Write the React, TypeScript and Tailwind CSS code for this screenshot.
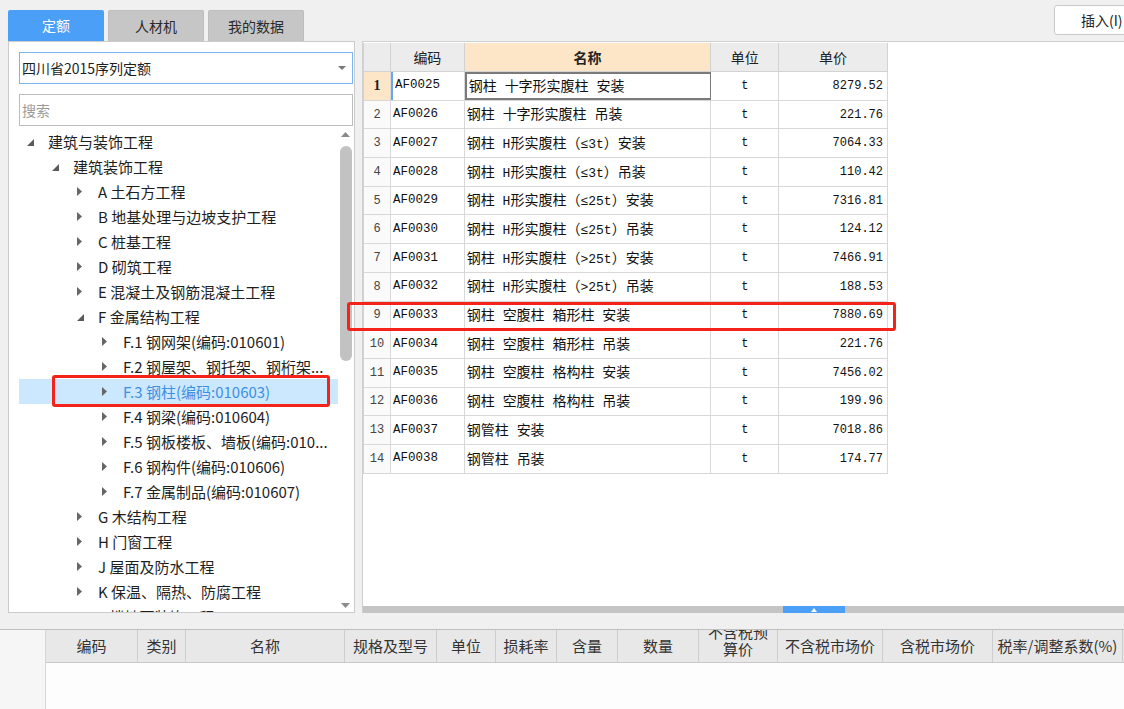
import React from "react";

type TreeItem = {
  level: number;
  label: string;
  state: "open" | "closed";
  selected?: boolean;
};

const tree: TreeItem[] = [
  { level: 0, label: "建筑与装饰工程", state: "open" },
  { level: 1, label: "建筑装饰工程", state: "open" },
  { level: 2, label: "A 土石方工程", state: "closed" },
  { level: 2, label: "B 地基处理与边坡支护工程", state: "closed" },
  { level: 2, label: "C 桩基工程", state: "closed" },
  { level: 2, label: "D 砌筑工程", state: "closed" },
  { level: 2, label: "E 混凝土及钢筋混凝土工程", state: "closed" },
  { level: 2, label: "F 金属结构工程", state: "open" },
  { level: 3, label: "F.1 钢网架(编码:010601)", state: "closed" },
  { level: 3, label: "F.2 钢屋架、钢托架、钢桁架...", state: "closed" },
  { level: 3, label: "F.3 钢柱(编码:010603)", state: "closed", selected: true },
  { level: 3, label: "F.4 钢梁(编码:010604)", state: "closed" },
  { level: 3, label: "F.5 钢板楼板、墙板(编码:010...", state: "closed" },
  { level: 3, label: "F.6 钢构件(编码:010606)", state: "closed" },
  { level: 3, label: "F.7 金属制品(编码:010607)", state: "closed" },
  { level: 2, label: "G 木结构工程", state: "closed" },
  { level: 2, label: "H 门窗工程", state: "closed" },
  { level: 2, label: "J 屋面及防水工程", state: "closed" },
  { level: 2, label: "K 保温、隔热、防腐工程", state: "closed" },
  { level: 2, label: "L 楼地面装饰工程", state: "closed" },
];

const rows = [
  ["AF0025", "钢柱 十字形实腹柱 安装", "8279.52"],
  ["AF0026", "钢柱 十字形实腹柱 吊装", "221.76"],
  ["AF0027", "钢柱 H形实腹柱（≤3t）安装", "7064.33"],
  ["AF0028", "钢柱 H形实腹柱（≤3t）吊装", "110.42"],
  ["AF0029", "钢柱 H形实腹柱（≤25t）安装", "7316.81"],
  ["AF0030", "钢柱 H形实腹柱（≤25t）吊装", "124.12"],
  ["AF0031", "钢柱 H形实腹柱（>25t）安装", "7466.91"],
  ["AF0032", "钢柱 H形实腹柱（>25t）吊装", "188.53"],
  ["AF0033", "钢柱 空腹柱 箱形柱 安装", "7880.69"],
  ["AF0034", "钢柱 空腹柱 箱形柱 吊装", "221.76"],
  ["AF0035", "钢柱 空腹柱 格构柱 安装", "7456.02"],
  ["AF0036", "钢柱 空腹柱 格构柱 吊装", "199.96"],
  ["AF0037", "钢管柱 安装", "7018.86"],
  ["AF0038", "钢管柱 吊装", "174.77"],
];

const bottomCols = [
  { w: "w-[92px]", label: "编码" },
  { w: "w-[48px]", label: "类别" },
  { w: "w-[159px]", label: "名称" },
  { w: "w-[92px]", label: "规格及型号" },
  { w: "w-[59px]", label: "单位" },
  { w: "w-[61px]", label: "损耗率" },
  { w: "w-[61px]", label: "含量" },
  { w: "w-[81px]", label: "数量" },
  { w: "w-[79px]", label: "不含税预算价", wrap: true },
  { w: "w-[105px]", label: "不含税市场价" },
  { w: "w-[110px]", label: "含税市场价" },
  { w: "w-[130px]", label: "税率/调整系数(%)" },
];

const indent = ["pl-[8px]", "pl-[33px]", "pl-[58px]", "pl-[83px]"];

const cjk = { fontFamily: '"Noto Sans CJK SC", "Liberation Sans", sans-serif' };
const mono = { fontFamily: '"Liberation Mono", "Noto Sans CJK SC", monospace' };

// Latin runs in the name column are half-width in the original font
function NameText({ text }: { text: string }) {
  const parts = text.split(/([A-Za-z0-9>≤ ]+)/);
  return (
    <span className="whitespace-pre">
      {parts.map((p, i) =>
        /^[A-Za-z0-9>≤ ]+$/.test(p) ? (
          <span key={i} className="text-[13px]" style={mono}>
            {p}
          </span>
        ) : (
          <span key={i}>{p}</span>
        )
      )}
    </span>
  );
}

function Expander({ state }: { state: "open" | "closed" }) {
  return state === "open" ? (
    <svg width="7" height="7" viewBox="0 0 7 7" className="mt-[2px]">
      <polygon points="7,0 7,7 0,7" fill="#5a5a5a" />
    </svg>
  ) : (
    <svg width="5" height="9" viewBox="0 0 5 9">
      <polygon points="0,0 5,4.5 0,9" fill="#666" />
    </svg>
  );
}

function TreeRow({ item }: { item: TreeItem }) {
  return (
    <div
      className={`relative flex h-[25px] shrink-0 items-center ${indent[item.level]} ${
        item.selected ? "bg-[#cce8ff] text-[#3f8fe3]" : "text-[#1e1e1e]"
      }`}
    >
      <div className="flex w-[21px] shrink-0 items-center">
        <Expander state={item.state} />
      </div>
      <span className="truncate text-[15px] leading-[25px]">{item.label}</span>
      {item.selected && (
        <div className="pointer-events-none absolute top-[-4px] left-[33px] h-[32px] w-[278px] rounded-[3px] border-[3px] border-[#f3231c]" />
      )}
    </div>
  );
}

export default function App() {
  return (
    <div className="relative flex h-[709px] w-[1124px] flex-col overflow-hidden bg-[#f0f0f0]" style={cjk}>
      <div className="flex h-[613px] shrink-0">
        {/* left: library panel */}
        <div className="flex w-[355px] shrink-0 flex-col pl-2">
          <div className="flex h-[41px] items-end gap-1">
            <div className="flex h-[31px] w-[96px] items-center justify-center rounded-t-[2px] bg-[#4c9ff6] text-[14px] text-white">
              定额
            </div>
            <div className="flex h-[31px] w-[96px] items-center justify-center rounded-t-[2px] border border-b-0 border-[#bdbdbd] bg-[#c6c6c6] text-[14px] text-[#2a2a2a]">
              人材机
            </div>
            <div className="flex h-[31px] w-[96px] items-center justify-center rounded-t-[2px] border border-b-0 border-[#bdbdbd] bg-[#c6c6c6] text-[14px] text-[#2a2a2a]">
              我的数据
            </div>
          </div>
          <div className="flex min-h-0 flex-1 flex-col border border-[#cbcbcb] bg-white pt-[10px] pr-[1px] pl-[10px]">
            <div className="flex h-[32px] items-center justify-between border border-[#7db5f3] pr-[6px] pl-[2px]">
              <span className="text-[14px] text-[#1e1e1e]">四川省2015序列定额</span>
              <svg width="8" height="4" viewBox="0 0 8 4">
                <polygon points="0,0 8,0 4,4" fill="#777" />
              </svg>
            </div>
            <div className="mt-[10px] flex h-[32px] items-center border border-[#bdbdbd] pl-[2px]">
              <span className="text-[14px] text-[#9a9a9a]">搜索</span>
            </div>
            <div className="mt-[3px] flex min-h-0 flex-1">
              <div className="flex min-w-0 flex-1 flex-col overflow-hidden">
                {tree.map((t, i) => (
                  <TreeRow key={i} item={t} />
                ))}
              </div>
              <div className="flex w-[15px] shrink-0 flex-col items-center">
                <svg width="9" height="5" viewBox="0 0 9 5" className="mt-[3px]">
                  <polygon points="0,5 9,5 4.5,0" fill="#8a8a8a" />
                </svg>
                <div className="mt-[9px] h-[215px] w-[12px] rounded-full bg-[#c2c2c2]" />
                <div className="flex-1" />
                <svg width="9" height="5" viewBox="0 0 9 5" className="mb-[4px]">
                  <polygon points="0,0 9,0 4.5,5" fill="#8a8a8a" />
                </svg>
              </div>
            </div>
          </div>
        </div>

        {/* right: quota list */}
        <div className="ml-[7px] flex min-w-0 flex-1 flex-col">
          <div className="flex h-[41px] shrink-0 justify-end pt-[5px]">
            <div className="-mr-[40px] flex h-[30px] w-[110px] items-center rounded-[3px] border border-[#c9c9c9] bg-white pl-[26px] text-[14px] text-[#222]">
              插入(I)
            </div>
          </div>
          <div className="flex min-h-0 flex-1 flex-col border-t border-l border-[#cfcfcf] bg-white">
            <div className="flex-1 pt-[1px]">
              <div className="w-[525px] border-l border-[#d2d2d2]">
                <div className="flex h-[29px] border-b border-[#d2d2d2] text-[14px] text-[#222]">
                  <div className="w-[27px] border-r border-[#d2d2d2] bg-[#ececec]" />
                  <div className="flex w-[74px] items-center justify-center border-r border-[#d2d2d2] bg-[#ececec]">编码</div>
                  <div className="flex w-[247px] items-center justify-center border-r border-[#d2d2d2] bg-[#fde6c8] font-bold">名称</div>
                  <div className="flex w-[68px] items-center justify-center border-r border-[#d2d2d2] bg-[#ececec]">单位</div>
                  <div className="flex w-[109px] items-center justify-center border-r border-[#d2d2d2] bg-[#ececec]">单价</div>
                </div>
                {rows.map(([code, name, price], i) => (
                  <div key={code} className="flex h-[28.7px] border-b border-[#d8d8d8] text-[14px] text-[#111]">
                    <div
                      className={`flex w-[27px] items-center justify-center border-r border-[#d8d8d8] text-[12px] ${
                        i === 0 ? "bg-[#fde6c8] font-bold text-[#222]" : "bg-[#fafafa] text-[#444]"
                      }`}
                      style={i === 0 ? { fontFamily: '"Liberation Serif", serif', fontSize: 14 } : mono}
                    >
                      {i + 1}
                    </div>
                    <div
                      className={`flex w-[74px] items-center border-r border-[#d8d8d8] pl-[2px] text-[12.5px] ${
                        i === 0 ? "border-l-2 border-l-[#6aa7ec]" : ""
                      }`}
                      style={mono}
                    >
                      {code}
                    </div>
                    <div
                      className={`flex w-[247px] items-center overflow-hidden border-r pl-[2px] ${
                        i === 0 ? "border-2 border-[#7a7a7a]" : "border-[#d8d8d8]"
                      }`}
                    >
                      <NameText text={name} />
                    </div>
                    <div className="flex w-[68px] items-center justify-center border-r border-[#d8d8d8] text-[12px]" style={mono}>
                      t
                    </div>
                    <div className="flex w-[109px] items-center justify-end border-r border-[#d8d8d8] pr-[4px] text-[12px]" style={mono}>
                      {price}
                    </div>
                  </div>
                ))}
              </div>
            </div>
            <div className="flex h-[7px] shrink-0 bg-[#c4c4c4]">
              <div className="ml-[420px] flex h-full w-[62px] items-center justify-center bg-[#4c9ff6]">
                <svg width="6" height="4" viewBox="0 0 6 4">
                  <polygon points="0,4 6,4 3,0" fill="#fff" />
                </svg>
              </div>
            </div>
          </div>
        </div>
      </div>

      {/* red annotation around row 9 */}
      <div className="pointer-events-none absolute top-[302px] left-[347px] h-[29px] w-[549px] rounded-[3px] border-[3px] border-[#f3231c]" />

      <div className="h-[16px] shrink-0" />

      {/* bottom: resource detail grid */}
      <div className="flex min-h-0 flex-1 border-t border-[#bfbfbf]">
        <div className="w-[46px] shrink-0 border-r border-[#d6d6d6] bg-[#f6f6f6]" />
        <div className="flex min-w-0 flex-1 flex-col bg-[#fdfdfd]">
          <div className="flex h-[33px] shrink-0 border-b border-[#c9c9c9] bg-[#e8e8e8] text-[15px] text-[#333]">
            {bottomCols.map((c) => (
              <div
                key={c.label}
                className={`${c.w} flex shrink-0 justify-center overflow-hidden border-r border-[#cdcdcd] ${
                  c.wrap ? "items-start" : "items-center"
                }`}
              >
                {c.wrap ? (
                  <div className="-mt-[7px] text-center text-[15px] leading-[17px]">
                    不含税预
                    <br />
                    算价
                  </div>
                ) : (
                  <span className="whitespace-nowrap">{c.label}</span>
                )}
              </div>
            ))}
          </div>
          <div className="flex-1" />
        </div>
      </div>
    </div>
  );
}
